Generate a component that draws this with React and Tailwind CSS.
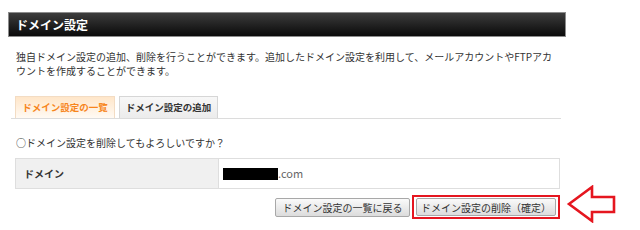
import React from "react";

function Arrow() {
  return (
    <svg
      className="absolute left-[566px] top-[185px]"
      width="52"
      height="38"
      viewBox="0 0 52 38"
      fill="none"
    >
      <path
        d="M3 19 L26 2 L26 12 L48 12 L48 27 L26 27 L26 36 Z"
        stroke="#e5161f"
        strokeWidth="2.6"
        strokeLinejoin="miter"
        fill="#fff"
      />
    </svg>
  );
}

export default function App() {
  return (
    <div className="relative w-[640px] h-[230px] bg-white text-[#333] font-['Noto_Sans_CJK_JP','Noto_Sans',sans-serif]">
      <div className="pt-3 pl-2 w-[566px]">
        <div className="h-[25px] flex items-center pl-[7px] border border-[#8c8c8c] bg-gradient-to-b from-[#3d3d3d] to-[#0b0b0b] text-white text-[12px] font-bold">
          ドメイン設定
        </div>

        <p className="mt-[13px] px-2 text-[10px] leading-[14px]">
          独自ドメイン設定の追加、削除を行うことができます。追加したドメイン設定を利用して、メールアカウントやFTPアカ
          <br />
          ウントを作成することができます。
        </p>

        <div className="ml-[3px] w-[550px] mt-[18px]">
          <div className="flex items-end gap-1 pl-1 border-b border-[#dcdcdc]">
            <div className="w-[100px] h-[22px] flex items-center justify-center border border-b-0 border-[#f3dcc3] bg-gradient-to-b from-[#ffe6c9] to-[#fffaf4] text-[#f7861c] text-[9.5px] font-bold">
              ドメイン設定の一覧
            </div>
            <div className="w-[99px] h-[22px] flex items-center justify-center border border-b-0 border-[#d6d6d6] bg-gradient-to-b from-[#f7f7f7] to-[#ececec] text-[#333] text-[9.5px] font-bold">
              ドメイン設定の追加
            </div>
          </div>

          <p className="mt-[17px] pl-[5px] text-[10px] leading-[14px]">
            ○ドメイン設定を削除してもよろしいですか？
          </p>

          <div className="mt-[8px] ml-1 w-[545px] h-[31px] flex border border-[#dedede] text-[10px]">
            <div className="w-[203px] flex items-center pl-[8px] bg-[#f0f0f0] border-r border-[#dedede] font-bold">
              ドメイン
            </div>
            <div className="flex-1 flex items-center pl-[4px]">
              <span className="inline-block w-[55px] h-[12px] bg-black" />
              <span className="text-[#666] text-[11px]">.com</span>
            </div>
          </div>

          <div className="mt-[6px] flex justify-end items-center pr-[1px]">
            <button className="w-[135px] h-[19px] mr-[2px] flex items-center justify-center border border-[#a8a8a8] rounded-[2px] bg-gradient-to-b from-[#fafafa] to-[#dcdcdc] text-[10px] text-[#333]">
              ドメイン設定の一覧に戻る
            </button>
            <div className="h-[24px] flex items-center px-[2px] border-2 border-[#e5161f]">
              <button className="w-[140px] h-[18px] flex items-center justify-center border border-[#a8a8a8] rounded-[2px] bg-gradient-to-b from-[#fafafa] to-[#dcdcdc] text-[10px] text-[#333]">
                ドメイン設定の削除（確定）
              </button>
            </div>
          </div>
        </div>
      </div>
      <Arrow />
    </div>
  );
}
